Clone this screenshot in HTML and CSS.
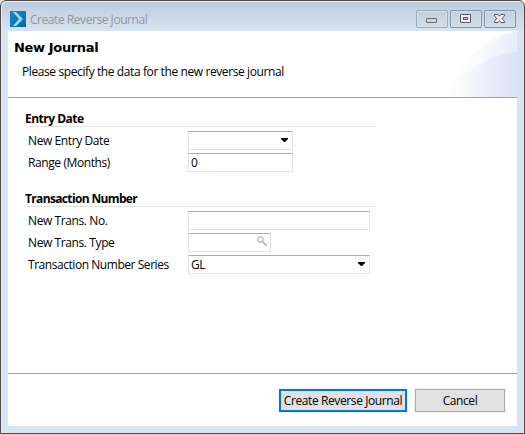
FILE: index.html
```html
<!DOCTYPE html>
<html lang="en">
<head>
<meta charset="utf-8">
<title>Create Reverse Journal</title>
<link rel="stylesheet" href="styles.css">
</head>
<body>
<div class="window">
  <div class="titlebar">
    <svg class="app-icon" width="16" height="16" viewBox="0 0 16 16">
      <defs><linearGradient id="app" x1="0" y1="0" x2="1" y2="1"><stop offset="0" stop-color="#1585c4"/><stop offset=".6" stop-color="#0c7abb"/><stop offset="1" stop-color="#0567a5"/></linearGradient></defs>
      <rect width="16" height="16" fill="url(#app)"/>
      <path d="M3 1h3l7 7-7 7H3l6-7z" fill="#a9d8ee"/>
    </svg>
    <span class="caption">Create Reverse Journal</span>
    <div class="controls">
      <span class="control"><svg width="30" height="16" viewBox="0 0 30 16"><rect x="9.5" y="7.5" width="10" height="4" rx=".5" fill="#d5d5d2" stroke="#686a72"/></svg></span>
      <span class="control"><svg width="30" height="16" viewBox="0 0 30 16"><rect x="9.500" y="3.500" width="10" height="8" rx=".5" fill="#f1f3f6" stroke="#555a70"/><rect x="12.500" y="6.500" width="4" height="2" fill="#c3d0df" stroke="#555a70"/></svg></span>
      <span class="control"><svg width="30" height="16" viewBox="0 0 30 16"><path d="M9.500 3.500h3.500l1.500 1.700 1.500-1.700h3.500v1.200L17.200 7.500l2.300 2.800v1.200H16l-1.500-1.700-1.500 1.700H9.500v-1.200l2.300-2.800-2.300-2.800z" fill="#f1f3f6" stroke="#50546a"/></svg></span>
    </div>
  </div>
  <div class="client">
    <header class="header">
      <h1>New Journal</h1>
      <p>Please specify the data for the new reverse journal</p>
      <svg class="swoosh" width="72" height="66" viewBox="0 0 72 66">
        <defs>
          <linearGradient id="back" gradientUnits="userSpaceOnUse" x1="0" x2="72" y1="0" y2="0"><stop offset="0" stop-color="#fff"/><stop offset=".5" stop-color="#f9fafd"/><stop offset="1" stop-color="#eef1fa"/></linearGradient>
          <linearGradient id="mid" gradientUnits="userSpaceOnUse" x1="33" x2="72" y1="0" y2="0"><stop offset="0" stop-color="#f9fafd"/><stop offset="1" stop-color="#e7ecf9"/></linearGradient>
          <linearGradient id="front" gradientUnits="userSpaceOnUse" x1="0" x2="72" y1="0" y2="0"><stop offset="0" stop-color="#fff"/><stop offset=".3" stop-color="#f8f9fd"/><stop offset=".6" stop-color="#eaeefa"/><stop offset="1" stop-color="#dbe2f5"/></linearGradient>
        </defs>
        <path d="M0 66C15 35 38 5 72 0v66z" fill="url(#back)"/>
        <path d="M33 34C42 17 54 5 72 1v65H33z" fill="url(#mid)"/>
        <path d="M0 66C19 39 44 24 72 21v45z" fill="url(#front)"/>
      </svg>
    </header>
    <main class="form">
      <section>
        <h2 class="entry-title">Entry Date</h2>
        <div class="row"><label>New Entry Date</label><div class="field medium"><i class="arrow"></i></div></div>
        <div class="row"><label>Range (Months)</label><div class="field medium">0</div></div>
      </section>
      <section>
        <h2 class="number-title">Transaction Number</h2>
        <div class="row"><label>New Trans. No.</label><div class="field wide"></div></div>
        <div class="row"><label>New Trans. Type</label><div class="field small"><svg class="search" width="11" height="11" viewBox="0 0 11 11"><circle cx="3.500" cy="3.500" r="2.800" fill="#f7f7f7" stroke="#bcbcbc" stroke-width="1.200"/><path d="M5.800 5.800l4 4" stroke="#b5b5b5" stroke-width="1.800"/></svg></div></div>
        <div class="row"><label class="l-series">Transaction Number Series</label><div class="field wide"><span class="value">GL</span><i class="arrow"></i></div></div>
      </section>
    </main>
    <footer class="footer">
      <button class="primary" type="button">Create Reverse Journal</button>
      <button class="cancel" type="button">Cancel</button>
    </footer>
  </div>
</div>
</body>
</html>
```

FILE: styles.css
```css
* { box-sizing: border-box; }
body {
  margin: 0;
  background: #fff;
  font: 12px/16px "Open Sans", "Noto Sans", sans-serif;
  letter-spacing: -0.4px;
  color: #000;
}
.window {
  width: 525px;
  height: 434px;
  border: 1px solid #4e494d;
  border-radius: 6px 6px 0 0;
  box-shadow: inset 1px 1px 0 #e7edf5;
  padding: 0 7px 7px;
  background: linear-gradient(#bccbdb 0, #d7e4f2 30px);
  display: flex;
  flex-direction: column;
}
.titlebar {
  height: 30px;
  flex: none;
  display: flex;
  align-items: flex-start;
  padding: 10px 1px 0 2px;
}
.app-icon { flex: none; }
.caption { margin: 1px 0 0 4px; color: #92979e; letter-spacing: -0.45px; white-space: nowrap; }
.controls { display: flex; gap: 2px; margin: -1px 0 0 auto; }
.control {
  width: 32px;
  height: 18px;
  border: 1px solid #8290aa;
  border-radius: 2px;
  background: linear-gradient(#c2d0df, #d1deeb);
  box-shadow: inset 0 0 0 1px #d4e0eb;
}
.control:first-child { border-color: #9eabb9; }
.control svg { display: block; }
.client { flex: 1; display: flex; flex-direction: column; background: #fff; }
.header {
  position: relative;
  height: 67px;
  border-bottom: 1px solid #a0a0a0;
  padding: 9px 0 0 6px;
}
h1 {
  margin: 0;
  font: bold 13px/16px "DejaVu Sans", sans-serif;
  letter-spacing: -0.35px;
}
.header p { margin: 8px 0 0 8px; white-space: nowrap; }
.swoosh { position: absolute; right: 0; top: 0; }
.form { flex: 1; padding: 13px 0 0 17px; }
section { width: 350px; margin-bottom: 19px; }
h2 {
  margin: 0 0 4px;
  height: 16px;
  border-bottom: 1px solid #e3e3e3;
  font-size: 12px;
  line-height: 16px;
  letter-spacing: -0.5px;
}
.number-title { letter-spacing: -0.65px; }
.row { display: flex; height: 19px; margin-bottom: 3px; }
.row label { width: 163px; padding-left: 3px; line-height: 20px; white-space: nowrap; }
.row .l-series { letter-spacing: -0.45px; }
.field {
  height: 19px;
  display: flex;
  align-items: center;
  border: 1px solid #e2e3ea;
  border-top-color: #abadb3;
  padding: 1px 4px 0 2px;
  letter-spacing: 0;
}
.value { letter-spacing: -0.5px; }
.medium { width: 105px; }
.wide { width: 182px; }
.small { width: 83px; }
.arrow {
  margin: -2px 0 0 auto;
  width: 7px;
  height: 4px;
  background: #000;
  clip-path: polygon(0 0, 100% 0, 100% 1px, 4px 4px, 3px 4px, 0 1px);
}
.search { margin: -4px -2px 0 auto; }
.footer {
  height: 53px;
  border-top: 1px solid #a0a0a0;
  display: flex;
  justify-content: flex-end;
  gap: 8px;
  padding: 15px 12px 0 0;
}
button {
  height: 23px;
  padding: 0;
  border: 1px solid #adadad;
  background: #e1e1e1;
  box-shadow: 0 0 0 1px #f0f0f0;
  font: inherit;
  letter-spacing: -0.4px;
  color: #000;
  white-space: nowrap;
}
.primary { width: 128px; border: 2px solid #0078d7; }
.cancel { width: 90px; }
```
